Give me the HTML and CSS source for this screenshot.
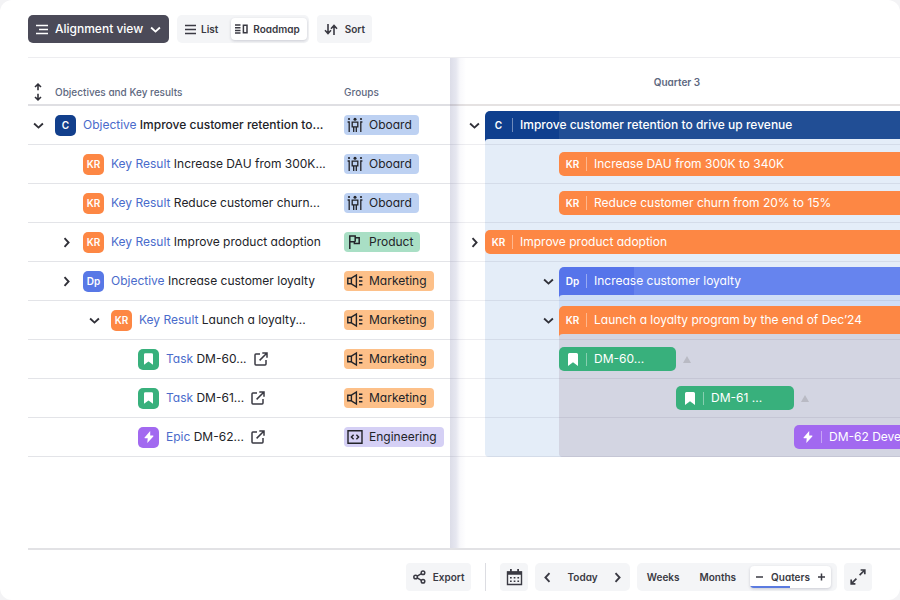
FILE: index.html
```html
<!DOCTYPE html>
<html lang="en">
<head>
    <meta charset="UTF-8">
    <meta name="viewport" content="width=device-width, initial-scale=1.0">
    <title>Roadmap</title>
    <link rel="stylesheet" href="styles.css">
</head>
<body>
    <!-- Shared icons -->
    <svg class="sprite" aria-hidden="true">
        <symbol id="i-down" viewBox="0 0 10 10"><path d="M1 3.2L5 6.9l4-3.7" fill="none" stroke="currentColor" stroke-width="1.7"/></symbol>
        <symbol id="i-right" viewBox="0 0 10 10"><path d="M3.2 1L6.9 5 3.2 9" fill="none" stroke="currentColor" stroke-width="1.7"/></symbol>
        <symbol id="i-left" viewBox="0 0 10 10"><path d="M6.8 1L3.1 5l3.7 4" fill="none" stroke="currentColor" stroke-width="1.7"/></symbol>
        <symbol id="i-bookmark" viewBox="0 0 10 13"><path d="M0 1.5Q0 0 1.5 0h7Q10 0 10 1.5V13L5 9.3 0 13z" fill="currentColor"/></symbol>
        <symbol id="i-bolt" viewBox="0 0 10 12"><path d="M6.2 0L.6 6.4q-.5.8.4.8h2.7L3.3 12l6-6.6q.5-.8-.4-.8H6.2z" fill="currentColor"/></symbol>
        <symbol id="i-external" viewBox="0 0 14 14"><path d="M6 2H1.9Q1 2 1 2.9v9.2q0 .9.9.9h9.2q.9 0 .9-.9V8M8.3 1H13v4.7M13 1L5.6 8.4" fill="none" stroke="currentColor" stroke-width="1.5"/></symbol>
        <symbol id="i-team" viewBox="0 0 16 16">
            <g fill="none" stroke="currentColor" stroke-width="1.3">
                <path d="M.6 5h1.6v10M15.4 5h-1.6v10M5.2 5.2h5.6v4.6H5.2zM6.7 9.8V15M9.3 9.8V15"/>
            </g>
            <circle cx="8" cy="2.2" r="1.5" fill="currentColor"/><circle cx="2" cy="2" r="1.1" fill="currentColor"/><circle cx="14" cy="2" r="1.1" fill="currentColor"/>
        </symbol>
        <symbol id="i-flag" viewBox="0 0 16 16"><path d="M2.8 15V2h5.4v1.8h4v5.6H7.4V7.8H2.8M8.2 3.8v4" fill="none" stroke="currentColor" stroke-width="1.5"/></symbol>
        <symbol id="i-horn" viewBox="0 0 16 16"><path d="M.8 5.2h3.6v5.6H.8zM4.4 5.2l5-3.2v12l-5-3.2M12 4.2h3.4M12 8h3.4M12 11.8h3.4" fill="none" stroke="currentColor" stroke-width="1.4"/></symbol>
        <symbol id="i-code" viewBox="0 0 16 16"><path d="M1 1.8h14v12.4H1zM6.6 5.8L4.4 8l2.2 2.2M9.4 5.8L11.6 8l-2.2 2.2" fill="none" stroke="currentColor" stroke-width="1.4"/></symbol>
    </svg>

    <div class="app">
        <header class="toolbar">
            <label class="view-select">
                <svg width="13" height="11" viewBox="0 0 13 11"><path d="M0 1.5h12M3 5.5h9M0 9.5h12" stroke="currentColor" stroke-width="1.6"/></svg>
                <select aria-label="View">
                    <option>Alignment view</option>
                </select>
                <svg class="icon-sm"><use href="#i-down"/></svg>
            </label>
            <div class="btn-group">
                <button class="btn" type="button">
                    <svg width="11" height="11" viewBox="0 0 11 11"><path d="M0 1.5h11M0 5.5h11M0 9.5h11" stroke="currentColor" stroke-width="1.6"/></svg>
                    List
                </button>
                <button class="btn btn-active" type="button" aria-pressed="true">
                    <svg width="13" height="10" viewBox="0 0 13 10"><path d="M0 1h5.5M0 3.7h5.5M0 6.4h5.5M0 9.1h5.5M8.4 1.2h3.6v7.6H8.4z" fill="none" stroke="currentColor" stroke-width="1.5"/></svg>
                    Roadmap
                </button>
            </div>
            <button class="btn btn-solo" type="button">
                <svg width="14" height="11" viewBox="0 0 14 11"><path d="M4 0v9.5M1 6.3l3 3.2 3-3.2M10 11V1.5M7 4.7l3-3.2 3 3.2" fill="none" stroke="currentColor" stroke-width="1.6"/></svg>
                Sort
            </button>
        </header>

        <main class="board">
            <section class="list-pane">
                <table class="okr-table">
                    <thead>
                        <tr>
                            <th>
                                <div class="cell">
                                    <span class="toggle"><svg width="10" height="18" viewBox="0 0 10 18"><path d="M5 1.2v6M2 4l3-2.8L8 4M5 10.8v6M2 14l3 2.8L8 14" fill="none" stroke="currentColor" stroke-width="1.6"/></svg></span>
                                    Objectives and Key results
                                </div>
                            </th>
                            <th class="col-group"><div class="cell">Groups</div></th>
                        </tr>
                    </thead>
                    <tbody>
                        <tr class="strong">
                            <td><div class="cell">
                                <button class="toggle" aria-label="Collapse"><svg class="icon-sm"><use href="#i-down"/></svg></button>
                                <span class="badge company">C</span>
                                <span><a href="#">Objective</a> Improve customer retention to...</span>
                            </div></td>
                            <td><span class="tag oboard"><svg><use href="#i-team"/></svg>Oboard</span></td>
                        </tr>
                        <tr>
                            <td><div class="cell level-1">
                                <span class="toggle"></span>
                                <span class="badge kr">KR</span>
                                <span><a href="#">Key Result</a> Increase DAU from 300K...</span>
                            </div></td>
                            <td><span class="tag oboard"><svg><use href="#i-team"/></svg>Oboard</span></td>
                        </tr>
                        <tr>
                            <td><div class="cell level-1">
                                <span class="toggle"></span>
                                <span class="badge kr">KR</span>
                                <span><a href="#">Key Result</a> Reduce customer churn...</span>
                            </div></td>
                            <td><span class="tag oboard"><svg><use href="#i-team"/></svg>Oboard</span></td>
                        </tr>
                        <tr>
                            <td><div class="cell level-1">
                                <button class="toggle" aria-label="Expand"><svg class="icon-sm"><use href="#i-right"/></svg></button>
                                <span class="badge kr">KR</span>
                                <span><a href="#">Key Result</a> Improve product adoption</span>
                            </div></td>
                            <td><span class="tag product"><svg><use href="#i-flag"/></svg>Product</span></td>
                        </tr>
                        <tr>
                            <td><div class="cell level-1">
                                <button class="toggle" aria-label="Expand"><svg class="icon-sm"><use href="#i-right"/></svg></button>
                                <span class="badge dept">Dp</span>
                                <span><a href="#">Objective</a> Increase customer loyalty</span>
                            </div></td>
                            <td><span class="tag marketing"><svg><use href="#i-horn"/></svg>Marketing</span></td>
                        </tr>
                        <tr>
                            <td><div class="cell level-2">
                                <button class="toggle" aria-label="Collapse"><svg class="icon-sm"><use href="#i-down"/></svg></button>
                                <span class="badge kr">KR</span>
                                <span><a href="#">Key Result</a> Launch a loyalty...</span>
                            </div></td>
                            <td><span class="tag marketing"><svg><use href="#i-horn"/></svg>Marketing</span></td>
                        </tr>
                        <tr>
                            <td><div class="cell level-3">
                                <span class="toggle"></span>
                                <span class="badge task"><svg width="9" height="12"><use href="#i-bookmark"/></svg></span>
                                <span><a href="#">Task</a> DM-60...</span>
                                <a class="open" href="#" aria-label="Open DM-60"><svg><use href="#i-external"/></svg></a>
                            </div></td>
                            <td><span class="tag marketing"><svg><use href="#i-horn"/></svg>Marketing</span></td>
                        </tr>
                        <tr>
                            <td><div class="cell level-3">
                                <span class="toggle"></span>
                                <span class="badge task"><svg width="9" height="12"><use href="#i-bookmark"/></svg></span>
                                <span><a href="#">Task</a> DM-61...</span>
                                <a class="open" href="#" aria-label="Open DM-61"><svg><use href="#i-external"/></svg></a>
                            </div></td>
                            <td><span class="tag marketing"><svg><use href="#i-horn"/></svg>Marketing</span></td>
                        </tr>
                        <tr>
                            <td><div class="cell level-3">
                                <span class="toggle"></span>
                                <span class="badge epic"><svg width="10" height="12"><use href="#i-bolt"/></svg></span>
                                <span><a href="#">Epic</a> DM-62...</span>
                                <a class="open" href="#" aria-label="Open DM-62"><svg><use href="#i-external"/></svg></a>
                            </div></td>
                            <td><span class="tag engineering"><svg><use href="#i-code"/></svg>Engineering</span></td>
                        </tr>
                    </tbody>
                </table>
            </section>

            <section class="timeline">
                <div class="timeline-head">Quarter 3</div>
                <div class="chart">
                    <div class="zone zone-company"></div>
                    <div class="zone zone-dept"></div>
                    <div class="zone zone-kr"></div>

                    <div class="line r1"></div>
                    <div class="line r2"></div>
                    <div class="line r3"></div>
                    <div class="line r4"></div>
                    <div class="line r5"></div>
                    <div class="line r6"></div>
                    <div class="line r7"></div>
                    <div class="line r8"></div>
                    <div class="line r9"></div>

                    <button class="toggle c1 r1" aria-label="Collapse"><svg class="icon-sm"><use href="#i-down"/></svg></button>
                    <div class="bar parent company c2 r1"><span class="bar-type">C</span>Improve customer retention to drive up revenue</div>
                    <div class="bar kr c3 r2"><span class="bar-type">KR</span>Increase DAU from 300K to 340K</div>
                    <div class="bar kr c3 r3"><span class="bar-type">KR</span>Reduce customer churn from 20% to 15%</div>
                    <button class="toggle c1 r4" aria-label="Expand"><svg class="icon-sm"><use href="#i-right"/></svg></button>
                    <div class="bar kr c2 r4"><span class="bar-type">KR</span>Improve product adoption</div>
                    <button class="toggle c2 r5" aria-label="Collapse"><svg class="icon-sm"><use href="#i-down"/></svg></button>
                    <div class="bar parent dept c3 r5"><span class="bar-type">Dp</span>Increase customer loyalty</div>
                    <button class="toggle c2 r6" aria-label="Collapse"><svg class="icon-sm"><use href="#i-down"/></svg></button>
                    <div class="bar parent kr c3 r6"><span class="bar-type">KR</span>Launch a loyalty program by the end of Dec’24</div>
                    <div class="bar task short c3 r7"><span class="bar-type"><svg width="10" height="13"><use href="#i-bookmark"/></svg></span>DM-60...</div>
                    <span class="marker c4 r7"></span>
                    <div class="bar task short c4 r8"><span class="bar-type"><svg width="10" height="13"><use href="#i-bookmark"/></svg></span>DM-61 ...</div>
                    <span class="marker c5 r8"></span>
                    <div class="bar epic c5 r9"><span class="bar-type"><svg width="10" height="12"><use href="#i-bolt"/></svg></span>DM-62 Develop</div>
                </div>
            </section>
        </main>

        <footer class="footer">
            <button class="btn btn-solo" type="button">
                <svg width="13" height="14" viewBox="0 0 13 14"><g fill="none" stroke="currentColor" stroke-width="1.5"><circle cx="2.6" cy="7" r="1.8"/><circle cx="10" cy="2.8" r="1.8"/><circle cx="10" cy="11.2" r="1.8"/><path d="M4.2 6.1l4.2-2.4M4.2 7.9l4.2 2.4"/></g></svg>
                Export
            </button>
            <span class="separator"></span>
            <button class="btn btn-icon" type="button" aria-label="Calendar">
                <svg width="17" height="17" viewBox="0 0 17 17"><path d="M1.5 3h14v12.5h-14z" fill="none" stroke="currentColor" stroke-width="1.4"/><path d="M1 2.5h15v3.2H1zM4 0h1.8v3H4zM11.2 0H13v3h-1.8z" fill="currentColor"/><path d="M4 8.8h9.5M4 12.2h9.5" stroke="currentColor" stroke-width="1.6" stroke-dasharray="1.7 2"/></svg>
            </button>
            <div class="btn-group period">
                <button class="btn" type="button" aria-label="Previous"><svg class="icon-sm"><use href="#i-left"/></svg></button>
                <button class="btn" type="button">Today</button>
                <button class="btn" type="button" aria-label="Next"><svg class="icon-sm"><use href="#i-right"/></svg></button>
            </div>
            <div class="btn-group scale">
                <button class="btn" type="button">Weeks</button>
                <button class="btn" type="button">Months</button>
                <div class="zoom">
                    <button class="btn" type="button" aria-label="Zoom out"><svg width="7" height="8" viewBox="0 0 7 8"><path d="M0 4h7" stroke="currentColor" stroke-width="1.5"/></svg></button>
                    <button class="btn" type="button">Quaters</button>
                    <button class="btn" type="button" aria-label="Zoom in"><svg width="7" height="8" viewBox="0 0 7 8"><path d="M0 4h7M3.5.5v7" stroke="currentColor" stroke-width="1.5"/></svg></button>
                </div>
            </div>
            <button class="btn btn-icon" type="button" aria-label="Full screen">
                <svg width="16" height="16" viewBox="0 0 16 16"><path d="M10.6 1h4.2v4.2M14.8 1L9.6 6.2M1.2 10.6v4.2h4.2M1.2 14.8l5.2-5.2" fill="none" stroke="currentColor" stroke-width="1.7"/></svg>
            </button>
        </footer>
    </div>
</body>
</html>
```

FILE: styles.css
```css
* {
    margin: 0;
    padding: 0;
    box-sizing: border-box;
}

body {
    font-family: Inter, "Open Sans", sans-serif;
    font-feature-settings: "cv11";
    font-size: 12px;
    line-height: 16px;
    color: #222328;
    background: #f3f3f5;
}

a {
    color: #4a6bcb;
    text-decoration: none;
}

button,
select {
    font: inherit;
    font-feature-settings: inherit;
    color: inherit;
    background: none;
    border: none;
    cursor: pointer;
}

svg {
    display: block;
    flex: none;
}

.sprite {
    position: absolute;
    width: 0;
    height: 0;
}

.icon-sm {
    width: 11px;
    height: 11px;
}

.app {
    display: flex;
    flex-direction: column;
    min-height: 100vh;
    background: #fff;
    border-radius: 12px;
    overflow: hidden;
}

/* Toolbar */
.toolbar {
    display: flex;
    align-items: flex-start;
    gap: 8px;
    height: 58px;
    margin-left: 28px;
    padding-top: 15px;
    border-bottom: 1px solid #ededf0;
}

.view-select {
    display: flex;
    align-items: center;
    gap: 6px;
    height: 28px;
    padding: 0 8px;
    border-radius: 5px;
    background: #4b4a58;
    color: #fff;
    font-weight: 500;
}

.view-select select {
    appearance: none;
}

.btn-group {
    display: flex;
    align-items: center;
    height: 28px;
    padding: 0 2px;
    border-radius: 5px;
    background: #f4f5f7;
}

.btn {
    display: flex;
    align-items: center;
    justify-content: center;
    gap: 5px;
    height: 22px;
    padding: 0 6px;
    border-radius: 4px;
    font-size: 10px;
    font-weight: 600;
    color: #3a3a43;
}

.toolbar .btn-group {
    gap: 7px;
}

.btn-active {
    padding: 0 7px 0 4px;
    background: #fff;
    box-shadow: 0 1px 3px rgba(40, 40, 70, 0.2);
}

.btn-solo {
    height: 28px;
    padding: 0 7px;
    gap: 7px;
    background: #f4f5f7;
}

.btn-icon {
    width: 28px;
    height: 28px;
    padding: 0;
    background: #f4f5f7;
}

/* Board */
.board {
    display: flex;
    flex: 1;
    margin-left: 28px;
    border-bottom: 2px solid #e2e2e5;
}

.list-pane {
    flex: 0 0 422px;
}

.okr-table {
    width: 100%;
    table-layout: fixed;
    border-spacing: 0;
    white-space: nowrap;
}

.okr-table th {
    height: 48px;
    padding-top: 22px;
    border-bottom: 2px solid #dfdfe3;
    font-size: 10px;
    font-weight: 500;
    color: #5d6880;
    text-align: left;
}

.okr-table td {
    height: 39px;
    border-bottom: 1px solid #e3e4e8;
}

.col-group {
    width: 106px;
}

.strong {
    font-weight: 500;
}

.strong a,
.strong .tag {
    font-weight: 400;
}

.cell {
    display: flex;
    align-items: center;
    gap: 7px;
}

.level-1 {
    padding-left: 28px;
}

.level-2 {
    padding-left: 56px;
}

.level-3 {
    padding-left: 83px;
}

.toggle {
    display: flex;
    align-items: center;
    justify-content: center;
    width: 20px;
    height: 20px;
    color: #303038;
}

.badge {
    display: flex;
    align-items: center;
    justify-content: center;
    width: 21px;
    height: 21px;
    border-radius: 5px;
    color: #fff;
    font-size: 10px;
    font-weight: 600;
}

.company {
    background: #123f8c;
}

.kr {
    background: #fd8744;
}

.dept {
    background: #5878e6;
}

.task {
    background: #38b07c;
}

.epic {
    background: #a269f0;
}

.open {
    color: #3a3a43;
}

.open svg {
    width: 14px;
    height: 14px;
}

.tag {
    display: inline-flex;
    align-items: center;
    gap: 6px;
    height: 20px;
    padding: 0 7px 0 3px;
    border-radius: 4px;
    vertical-align: middle;
}

.tag svg {
    width: 16px;
    height: 16px;
}

.oboard {
    background: #bdd1f2;
}

.product {
    background: #a9dfc5;
}

.marketing {
    background: #fdc089;
}

.engineering {
    background: #d5d0f5;
}

/* Timeline */
.timeline {
    flex: 1;
    min-width: 0;
    overflow: hidden;
    background: linear-gradient(90deg, #dcdde8 0, #e6e7f0 6px, #f8f8fb 10px, #fff 16px);
}

.timeline-head {
    height: 48px;
    padding: 16px 0 0 4px;
    border-bottom: 2px solid rgba(70, 50, 50, 0.14);
    font-size: 10px;
    font-weight: 600;
    color: #5d6880;
    text-align: center;
}

.chart {
    display: grid;
    grid-template-columns: 35px 74px 117px 118px 1fr;
    grid-template-rows: repeat(9, 39px);
    white-space: nowrap;
}

.c1 { grid-column: 1; }
.c2 { grid-column: 2 / -1; }
.c3 { grid-column: 3 / -1; }
.c4 { grid-column: 4; }
.c5 { grid-column: 5; }

.r1 { grid-row: 1; }
.r2 { grid-row: 2; }
.r3 { grid-row: 3; }
.r4 { grid-row: 4; }
.r5 { grid-row: 5; }
.r6 { grid-row: 6; }
.r7 { grid-row: 7; }
.r8 { grid-row: 8; }
.r9 { grid-row: 9; }

.line {
    grid-column: 1 / -1;
    border-bottom: 1px solid rgba(60, 60, 90, 0.09);
}

.zone {
    margin-top: 20px;
    border-radius: 0 0 0 4px;
}

.zone-company {
    grid-area: 1 / 2 / 10 / -1;
    background: #e4edf8;
}

.zone-dept {
    grid-area: 5 / 3 / 10 / -1;
    background: #cfdef6;
}

.zone-kr {
    grid-area: 6 / 3 / 10 / -1;
    background: #d3d5e2;
}

.chart .toggle {
    align-self: center;
    margin-left: 14px;
}

.chart .toggle.c2 {
    margin-left: 53px;
}

.bar {
    position: relative;
    display: flex;
    align-items: center;
    height: 24px;
    margin-top: 7px;
    border-radius: 5px 0 0 5px;
    color: #fff;
}

.bar.short {
    grid-column-end: span 1;
    border-radius: 5px;
}

.bar.parent {
    height: 28px;
    margin-top: 5px;
    border-radius: 5px 0 0 0;
}

/* Small tail that hooks a parent bar onto its area */
.bar.parent::after {
    content: "";
    position: absolute;
    top: 100%;
    left: 0;
    width: 4px;
    height: 3px;
    background: inherit;
    clip-path: path("M0 0H4Q0 0 0 3z");
}

.bar.company {
    background: linear-gradient(90deg, #0f3f8e 74px, #214e95 74px);
    font-weight: 500;
}

.bar.dept {
    background: linear-gradient(90deg, #5674ea 75px, #6684ee 75px);
}

.bar-type {
    display: flex;
    justify-content: center;
    width: 28px;
    margin-right: 7px;
    border-right: 1px solid rgba(255, 255, 255, 0.4);
    font-size: 10px;
    font-weight: 600;
    line-height: 14px;
}

.marker {
    align-self: center;
    width: 8px;
    height: 7px;
    margin-left: 7px;
    background: #b9bac4;
    clip-path: polygon(50% 0, 100% 100%, 0 100%);
}

/* Footer */
.footer {
    display: flex;
    align-items: center;
    justify-content: flex-end;
    gap: 7px;
    height: 50px;
    padding: 4px 28px 0;
}

.separator {
    width: 1px;
    height: 28px;
    margin: 0 7px;
    background: #dcdde2;
}

.period {
    padding: 0;
}

.period .btn {
    padding: 0 7px;
}

.scale {
    gap: 8px;
    padding: 0 6px 0 4px;
}

.zoom {
    display: flex;
    align-items: center;
    border-radius: 4px;
    background: linear-gradient(90deg, #5b7be0 50%, transparent 50%) bottom / 100% 2px no-repeat #fff;
    box-shadow: 0 1px 3px rgba(40, 40, 70, 0.2);
}

.zoom .btn {
    padding: 0 4px;
}

.zoom .btn:first-child {
    padding-left: 6px;
}

.zoom .btn:last-child {
    padding-right: 6px;
}
```
